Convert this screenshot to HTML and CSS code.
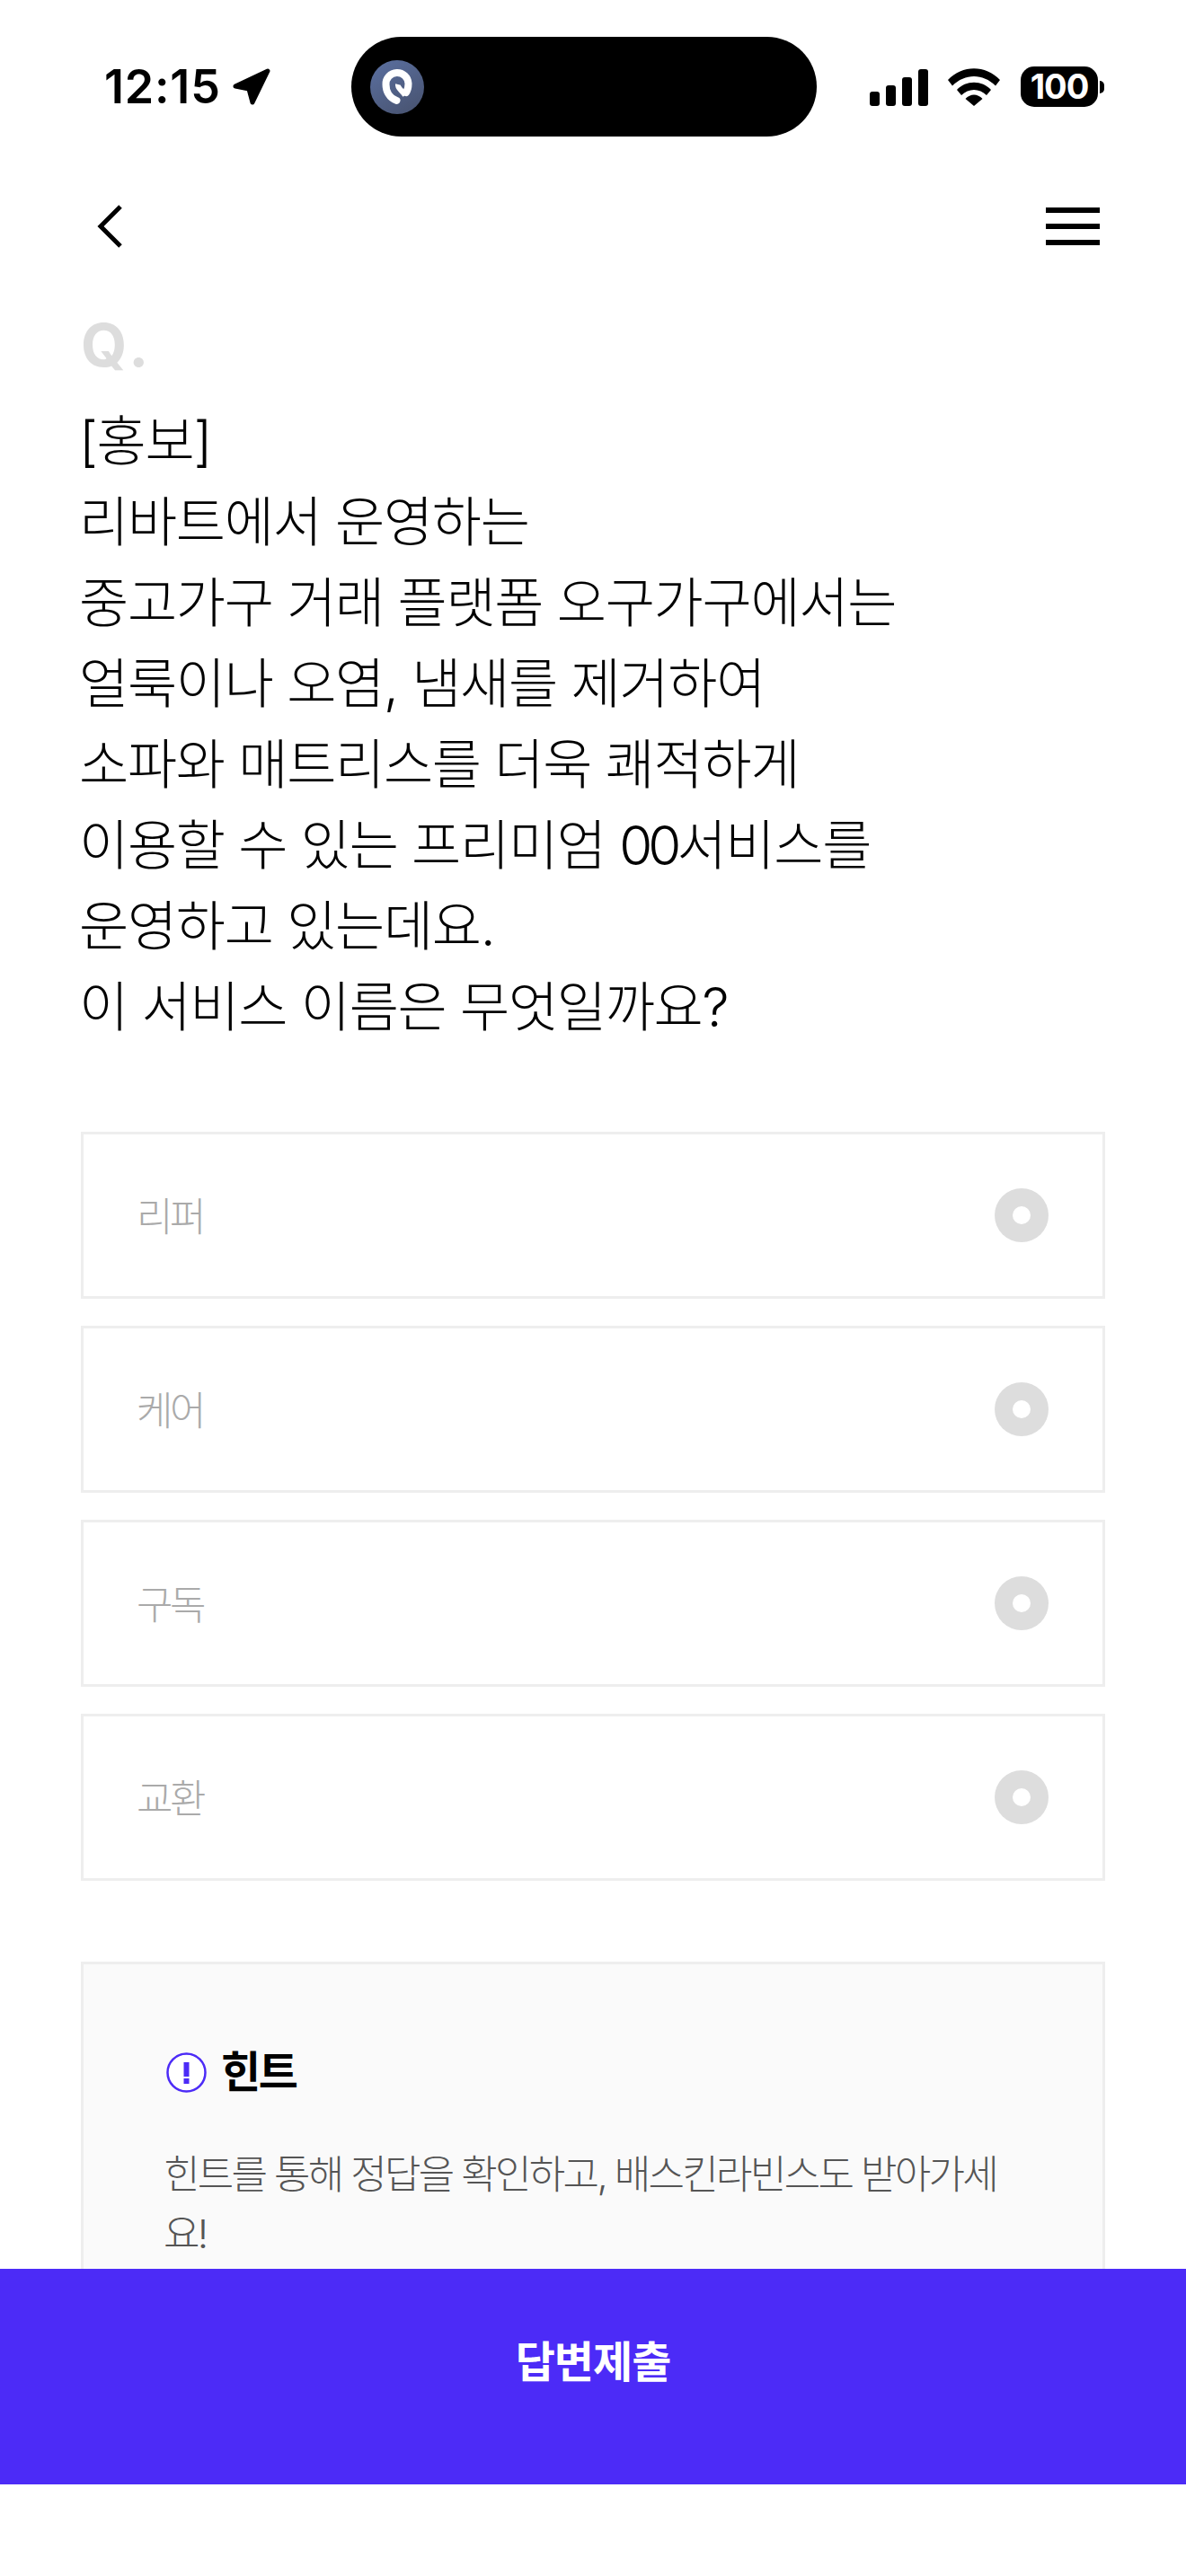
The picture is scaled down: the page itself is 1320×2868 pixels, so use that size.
FILE: index.html
```html
<!DOCTYPE html>
<html lang="ko">
<head>
    <meta charset="UTF-8">
    <meta name="viewport" content="width=device-width, initial-scale=1.0">
    <title>Quiz</title>
    <link rel="stylesheet" href="styles.css">
</head>
<body>
    <div class="screen">
        <!-- Status bar -->
        <header class="status_bar">
            <div class="status_time">
                <span class="clock">12:15</span>
                <svg class="loc_icon" viewBox="0 0 42 41"><path d="M3 20 L39 3 L22 38 L18 23 Z" fill="#000" stroke="#000" stroke-width="5" stroke-linejoin="round"/></svg>
            </div>
            <div class="island">
                <svg class="island_logo" viewBox="0 0 60 60">
                    <defs>
                        <linearGradient id="logoGrad" x1="0" y1="0" x2="0.6" y2="1">
                            <stop offset="0" stop-color="#5b70a1"/>
                            <stop offset="1" stop-color="#4a5675"/>
                        </linearGradient>
                    </defs>
                    <circle cx="30" cy="30" r="30" fill="url(#logoGrad)"/>
                    <path d="M29.5 45 C21 42 17.5 34 17.5 27 A12.5 12.5 0 0 1 42.5 26 C42.5 30 42 33 40 36" fill="none" stroke="#fff" stroke-width="8" stroke-linecap="round"/>
                    <path d="M31 27 C30 31 35 33 39 39" fill="none" stroke="#fff" stroke-width="6"/>
                </svg>
            </div>
            <div class="status_icons">
                <div class="signal">
                    <span class="bar bar_1"></span>
                    <span class="bar bar_2"></span>
                    <span class="bar bar_3"></span>
                    <span class="bar bar_4"></span>
                </div>
                <svg class="wifi_icon" viewBox="0 0 58 42">
                    <path d="M0 13 C16 -4 42 -4 58 13 L53 19.500 C39 5.500 19 5.500 5 19.500 Z"/>
                    <path d="M10 24 C20 13 38 13 48 24 L43 30 C35 22 23 22 15 30 Z"/>
                    <path d="M19.500 34 C25 28 33 28 38.500 34 L29 42 Z"/>
                </svg>
                <div class="battery">
                    <div class="battery_body">100</div>
                    <span class="battery_nub"></span>
                </div>
            </div>
        </header>

        <!-- Top navigation -->
        <nav class="top_nav">
            <svg class="back_icon" viewBox="0 0 30 48"><path d="M26 2 L4 24 L26 46" fill="none" stroke="#000" stroke-width="5"/></svg>
            <div class="menu_icon"><span></span><span></span><span></span></div>
        </nav>

        <main class="quiz">
            <div class="q_mark">Q.</div>
            <p class="question">[홍보]<br>리바트에서 운영하는<br>중고가구 거래 플랫폼 오구가구에서는<br>얼룩이나 오염, 냄새를 제거하여<br>소파와 매트리스를 더욱 쾌적하게<br>이용할 수 있는 프리미엄 <span class="tight">00</span>서비스를<br>운영하고 있는데요.<br>이 서비스 이름은 무엇일까요?</p>

            <ul class="options">
                <li class="option"><span>리퍼</span><i class="radio"></i></li>
                <li class="option"><span>케어</span><i class="radio"></i></li>
                <li class="option"><span>구독</span><i class="radio"></i></li>
                <li class="option"><span>교환</span><i class="radio"></i></li>
            </ul>

            <section class="hint">
                <h2 class="hint_title">
                    <svg class="hint_icon" viewBox="0 0 45 45">
                        <circle cx="22.500" cy="22.500" r="21" fill="#fff" stroke="#4c2bf7" stroke-width="2.500"/>
                        <rect x="19.500" y="11" width="6" height="16" fill="#4c2bf7"/>
                        <rect x="19.500" y="29" width="6" height="6" fill="#4c2bf7"/>
                    </svg>
                    힌트
                </h2>
                <p class="hint_text">힌트를 통해 정답을 확인하고, 배스킨라빈스도 받아가세요!</p>
            </section>
        </main>

        <button type="button" class="submit_btn">답변제출</button>
    </div>
</body>
</html>
```

FILE: styles.css
```css
* {
    box-sizing: border-box;
}
body {
    margin: 0;
    background-color: #fff;
    font-family: Inter, "Noto Sans CJK KR", sans-serif;
    color: #000;
}
.screen {
    position: relative;
    width: 1320px;
    height: 2868px;
    overflow: hidden;
}

/* Status bar */
.status_bar {
    display: flex;
    align-items: center;
    height: 111px;
    margin-top: 41px;
    padding-left: 116px;
}
.status_time {
    display: flex;
    align-items: center;
    width: 184px;
    gap: 13px;
}
.clock {
    font-size: 52px;
    font-weight: 600;
    letter-spacing: 0.800px;
    line-height: 60px;
}
.loc_icon {
    width: 42px;
    height: 41px;
    flex: none;
}
.island {
    display: flex;
    align-items: center;
    width: 518px;
    height: 111px;
    margin-left: 91px;
    padding-left: 21px;
    background-color: #000;
    border-radius: 56px;
}
.island_logo {
    width: 60px;
    height: 60px;
}
.status_icons {
    display: flex;
    align-items: flex-end;
    height: 45px;
    margin-left: 59px;
}
.signal {
    display: flex;
    align-items: flex-end;
    gap: 7px;
    width: 65px;
    height: 41px;
    margin-bottom: 1px;
}
.bar {
    width: 11px;
    background-color: #000;
    border-radius: 3px;
}
.bar_1 { height: 16px; }
.bar_2 { height: 23px; }
.bar_3 { height: 32px; }
.bar_4 { height: 41px; }
.wifi_icon {
    width: 58px;
    height: 42px;
    margin-left: 22px;
    margin-bottom: 1px;
}
.battery {
    display: flex;
    align-items: center;
    gap: 2px;
    margin-left: 23px;
}
.battery_body {
    width: 86px;
    height: 45px;
    background-color: #000;
    border-radius: 15px;
    color: #fff;
    font-size: 38px;
    font-weight: 700;
    letter-spacing: -1px;
    line-height: 45px;
    text-align: center;
}
.battery_nub {
    width: 5px;
    height: 14px;
    background-color: #000;
    border-radius: 0 7px 7px 0;
}

/* Top navigation */
.top_nav {
    display: flex;
    justify-content: space-between;
    align-items: center;
    height: 200px;
    padding: 0 96px 0 108px;
}
.back_icon {
    width: 30px;
    height: 48px;
}
.menu_icon {
    display: flex;
    flex-direction: column;
    gap: 12px;
    width: 60px;
}
.menu_icon span {
    height: 6px;
    background-color: #000;
}

/* Question */
.quiz {
    padding: 0 90px;
}
.q_mark {
    height: 94px;
    color: #ddd;
    font-size: 66px;
    font-weight: 700;
    letter-spacing: 5px;
    line-height: 64px;
}
.question {
    margin: 0 0 0 -2px;
    font-size: 60px;
    font-weight: 300;
    letter-spacing: -1.300px;
    line-height: 90px;
}
.tight {
    letter-spacing: -5px;
}

/* Answer options */
.options {
    display: flex;
    flex-direction: column;
    gap: 30px;
    margin: 94px 0 0;
    padding: 0;
    list-style: none;
}
.option {
    display: flex;
    justify-content: space-between;
    align-items: center;
    height: 186px;
    padding: 0 60px 0 59px;
    border: 3px solid #eee;
    color: #aaa;
    font-size: 44px;
    font-weight: 300;
    letter-spacing: -3.500px;
}
.option span {
    margin-top: -2px;
}
.radio {
    position: relative;
    width: 60px;
    height: 60px;
    background-color: #ddd;
    border-radius: 50%;
}
.radio::after {
    content: "";
    position: absolute;
    top: 20px;
    left: 20px;
    width: 20px;
    height: 20px;
    background-color: #fff;
    border-radius: 50%;
}

/* Hint box */
.hint {
    height: 500px;
    margin-top: 90px;
    padding: 90px 92px;
    background-color: #fafafa;
    border: 3px solid #eee;
}
.hint_title {
    display: flex;
    align-items: center;
    gap: 16px;
    margin: 0;
    font-size: 48px;
    font-weight: 700;
    letter-spacing: -2.500px;
    line-height: 60px;
}
.hint_icon {
    width: 45px;
    height: 45px;
    flex: none;
}
.hint_text {
    margin: 51px 0 0 -3px;
    color: #555;
    font-size: 44px;
    font-weight: 300;
    letter-spacing: -2.700px;
    line-height: 66px;
    word-break: break-all;
}

/* Bottom button sits over the hint box */
.submit_btn {
    position: absolute;
    left: 0;
    bottom: 102px;
    width: 100%;
    height: 240px;
    padding: 0 0 41px;
    background-color: #4c2bf7;
    border: none;
    color: #fff;
    font-family: inherit;
    font-size: 48px;
    font-weight: 700;
    letter-spacing: -1px;
}
```
